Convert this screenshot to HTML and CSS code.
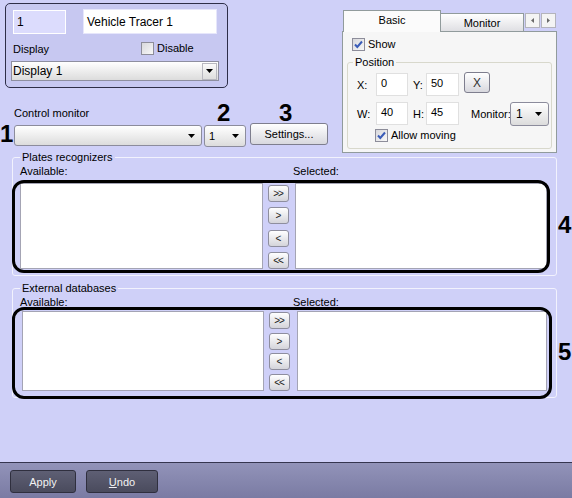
FILE: index.html
```html
<!DOCTYPE html>
<html>
<head>
<meta charset="utf-8">
<link rel="stylesheet" href="styles.css">
</head>
<body>
<div class="main">
  <div class="top">
    <div class="left">
      <div class="idpanel">
        <div class="idrow">
          <div class="field field-id">1</div>
          <div class="field field-name">Vehicle Tracer 1</div>
        </div>
        <div class="disprow">
          <span class="lbl-display">Display</span>
          <span class="chk"><span class="box"></span>Disable</span>
        </div>
        <div class="combo">
          <span class="combo-text">Display 1</span>
          <span class="combo-btn"><svg width="7" height="4" viewBox="0 0 7 4"><path d="M0 0H7L3.5 4Z" fill="#000"/></svg></span>
        </div>
      </div>
      <div class="ctrl-label">Control monitor</div>
      <div class="ctrl-row">
        <span class="anno anno-1">1</span>
        <span class="anno anno-2">2</span>
        <span class="anno anno-3">3</span>
        <div class="select select-monitor"><span class="select-text"></span><svg width="7" height="4" viewBox="0 0 7 4"><path d="M0 0H7L3.5 4Z" fill="#000"/></svg></div>
        <div class="select select-num"><span class="select-text">1</span><svg width="7" height="4" viewBox="0 0 7 4"><path d="M0 0H7L3.5 4Z" fill="#000"/></svg></div>
        <div class="btn btn-settings">Settings...</div>
      </div>
    </div>
    <div class="tabs">
      <div class="tabstrip">
        <div class="tab tab-active">Basic</div>
        <div class="tab tab-normal">Monitor</div>
        <div class="tabscroll">
          <span class="sbtn"><svg width="3" height="5" viewBox="0 0 3 5"><path d="M3 0V5L0 2.5Z" fill="#6a6a6a"/></svg></span>
          <span class="sbtn"><svg width="3" height="5" viewBox="0 0 3 5"><path d="M0 0V5L3 2.5Z" fill="#6a6a6a"/></svg></span>
        </div>
      </div>
      <div class="tabbody">
        <div class="chk chk-show"><span class="box box-checked"><svg width="11" height="11" viewBox="0 0 11 11"><path d="M2 5.5L4.3 8L9 2.5" fill="none" stroke="#3a5cb8" stroke-width="2"/></svg></span>Show</div>
        <fieldset class="pos">
          <legend class="pos-legend">Position</legend>
          <div class="posrow">
            <span class="plbl">X:</span>
            <div class="pinput pinput-a">0</div>
            <span class="plbl plbl-b">Y:</span>
            <div class="pinput pinput-b">50</div>
            <div class="btn btn-x">X</div>
          </div>
          <div class="posrow">
            <span class="plbl">W:</span>
            <div class="pinput pinput-a">40</div>
            <span class="plbl plbl-b">H:</span>
            <div class="pinput pinput-b">45</div>
            <span class="plbl-mon">Monitor:</span>
            <div class="select select-mon"><span class="select-text">1</span><svg width="7" height="4" viewBox="0 0 7 4"><path d="M0 0H7L3.5 4Z" fill="#000"/></svg></div>
          </div>
          <div class="posrow posrow-allow">
            <span class="chk"><span class="box box-checked"><svg width="11" height="11" viewBox="0 0 11 11"><path d="M2 5.5L4.3 8L9 2.5" fill="none" stroke="#3a5cb8" stroke-width="2"/></svg></span>Allow moving</span>
          </div>
        </fieldset>
      </div>
    </div>
  </div>

  <fieldset class="group group-plates">
    <legend class="group-legend">Plates recognizers</legend>
    <div class="gl-row"><span class="gl-avail">Available:</span><span>Selected:</span></div>
    <div class="lists">
      <div class="list list-avail"></div>
      <div class="arrows">
        <div class="abtn">&gt;&gt;</div>
        <div class="abtn">&gt;</div>
        <div class="abtn">&lt;</div>
        <div class="abtn">&lt;&lt;</div>
      </div>
      <div class="list list-sel"></div>
      <div class="anno-box"></div>
      <span class="anno anno-side">4</span>
    </div>
  </fieldset>

  <fieldset class="group group-ext">
    <legend class="group-legend">External databases</legend>
    <div class="gl-row"><span class="gl-avail">Available:</span><span>Selected:</span></div>
    <div class="lists">
      <div class="list list-avail"></div>
      <div class="arrows">
        <div class="abtn">&gt;&gt;</div>
        <div class="abtn">&gt;</div>
        <div class="abtn">&lt;</div>
        <div class="abtn">&lt;&lt;</div>
      </div>
      <div class="list list-sel"></div>
      <div class="anno-box"></div>
      <span class="anno anno-side">5</span>
    </div>
  </fieldset>
</div>
<div class="bottombar">
  <div class="bbtn bbtn-apply">Apply</div>
  <div class="bbtn bbtn-undo"><u>U</u>ndo</div>
</div>
</body>
</html>
```
FILE: styles.css
```css
* { box-sizing: border-box; }
html, body { margin: 0; padding: 0; }
body {
  width: 572px;
  height: 498px;
  overflow: hidden;
  background: #cfd0f8;
  font-family: "Liberation Sans", Arial, sans-serif;
  font-size: 11px;
  color: #000;
}
.main { height: 462px; }
.top { display: flex; align-items: flex-start; height: 153px; }
.left { width: 342px; }

/* id panel */
.idpanel {
  margin: 3px 0 0 5px;
  width: 223px;
  height: 85px;
  border: 1px solid #2e2e48;
  border-radius: 5px;
  background: #c7c8f1;
  padding: 6px 0 0 7px;
}
.idrow { display: flex; align-items: flex-start; }
.field { font-size: 12px; line-height: 16px; padding: 3px 3px; }
.field-id { width: 53px; height: 24px; background: #dcdcfd; border: 1px solid #fff; }
.field-name { margin: -1px 0 0 17px; width: 134px; height: 25px; background: #fff; border: 1px solid #e6e6fb; padding-top: 4px; }
.disprow { display: flex; align-items: center; margin-top: 8px; height: 13px; }
.lbl-display { width: 128px; }
.chk { display: flex; align-items: center; line-height: 13px; }
.box {
  width: 13px; height: 13px;
  border: 1px solid #8d8d9a;
  background: linear-gradient(135deg, #d8d8dc, #f8f8f8);
  margin-right: 3px;
  display: flex; align-items: center; justify-content: center;
  flex: none;
}
.combo {
  margin: 6px 0 0 -2px;
  width: 208px; height: 20px;
  border: 1px solid #8e8fa0;
  background: linear-gradient(#ffffff, #dcdcdc);
  display: flex; align-items: center; justify-content: space-between;
  padding: 0 1px 0 1px;
}
.combo-text { font-size: 12px; }
.combo-btn {
  width: 15px; height: 17px;
  border: 1px solid #b8b8c0;
  background: linear-gradient(#fafafa, #dedede);
  display: flex; align-items: center; justify-content: center;
}

/* control monitor */
.ctrl-label { margin: 19px 0 0 14px; line-height: 13px; }
.ctrl-row {
  position: relative;
  display: flex; align-items: flex-start;
  margin-top: 3px; padding-left: 14px; height: 23px;
}
.anno { position: absolute; font-size: 24px; line-height: 24px; font-weight: bold; }
.anno-1 { left: 0; top: -1px; }
.anno-2 { left: 217px; top: -22px; }
.anno-3 { left: 279px; top: -22px; }
.select {
  border: 1px solid #8c8c9c;
  border-radius: 3px;
  background: linear-gradient(#ffffff, #dcdcdc);
  display: flex; align-items: center; justify-content: space-between;
  padding: 0 6px 0 4px;
}
.select-monitor { margin-top: 2px; width: 188px; height: 21px; }
.select-num { margin: 2px 0 0 2px; width: 42px; height: 22px; }
.btn {
  border: 1px solid #7e7e8e;
  border-radius: 3px;
  background: linear-gradient(#ffffff, #d8d8de);
  display: flex; align-items: center; justify-content: center;
}
.btn-settings { margin-left: 4px; width: 78px; height: 22px; }

/* tabs */
.tabs { margin-top: 10px; width: 215px; height: 143px; }
.tabstrip { display: flex; align-items: flex-end; height: 21px; position: relative; z-index: 1; }
.tab { border: 1px solid #919b9c; border-bottom: none; text-align: center; }
.tab-active {
  margin: 0 0 -1px 1px; width: 98px; height: 22px;
  background: #fbfbfb; padding-top: 3px;
}
.tab-normal {
  width: 83px; height: 18px; border-left: none;
  background: linear-gradient(#ffffff, #dfdfe3); padding-top: 3px;
}
.tabscroll { display: flex; gap: 1px; margin-left: 1px; align-self: flex-start; margin-top: 3px; }
.sbtn {
  width: 15px; height: 15px;
  border: 1px solid #b4b4bc;
  background: #f4f4f4;
  display: flex; align-items: center; justify-content: center;
}
.tabbody {
  height: 122px;
  border: 1px solid #919b9c;
  background: #f6f6f6;
  padding: 6px 9px;
}
.chk-show { height: 13px; }
.pos {
  margin: 6px -5px 0 -5px;
  height: 92px;
  border: 1px solid #d8d8cc;
  border-radius: 3px;
  padding: 0 0 0 9px;
  min-width: 0;
}
.pos-legend { margin-left: -4px; padding: 0 2px; line-height: 10px; }
.posrow { display: flex; align-items: center; margin-top: 6px; }
.plbl { width: 19px; }
.plbl-b { width: 13px; margin-left: 5px; }
.pinput {
  height: 23px;
  background: #fff;
  border: 1px solid #e0e0e0;
  padding: 3px 4px;
  line-height: 13px;
  align-self: flex-start;
}
.pinput-a { width: 32px; }
.pinput-b { width: 33px; }
.btn-x { margin: -1px 0 0 5px; width: 26px; height: 21px; align-self: flex-start; font-size: 12px; font-weight: normal; color: #333; }
.plbl-mon { margin-left: 12px; width: 39px; }
.select-mon { width: 39px; height: 24px; padding: 0 6px 0 5px; font-size: 12px; }
.posrow-allow { margin-top: 3px; padding-left: 18px; }

/* groups */
.group {
  margin: -1px 0 0 12px;
  width: 545px;
  border: 1px solid #f2f2fd;
  border-radius: 3px;
  padding: 0 9px 6px 7px;
  min-width: 0;
}
.group-legend { padding: 0 2px; line-height: 10px; }
.gl-row { display: flex; margin-top: 3px; height: 12px; line-height: 12px; }
.gl-avail { width: 273px; }
.lists { position: relative; display: flex; margin-top: 6px; height: 86px; }
.list { background: #fff; border: 1px solid #a4a4b4; }
.list-avail { width: 243px; }
.list-sel { flex: 1; margin-left: 6px; }
.arrows {
  width: 21px; margin-left: 5px;
  display: flex; flex-direction: column; justify-content: space-between;
  padding-top: 2px;
}
.abtn {
  height: 17px;
  border: 1px solid #8e8e9e;
  border-radius: 3px;
  background: linear-gradient(#ffffff, #d4d4da);
  font-size: 10px;
  letter-spacing: -1px;
  color: #222;
  display: flex; align-items: center; justify-content: center;
  padding-right: 1px;
}
.anno-box {
  position: absolute;
  left: -8px; right: -3px; top: -3px; bottom: -4px;
  border: 3px solid #000;
  border-radius: 12px;
}
.anno-side { left: calc(100% + 11px); top: 30px; }

.group-ext { margin-top: 7px; padding-left: 9px; }
.group-ext .group-legend { margin-left: -2px; }
.group-ext .gl-row { margin-left: -2px; }
.group-ext .gl-avail { width: 273px; }
.group-ext .lists { margin-top: 3px; height: 80px; }
.group-ext .list-avail { width: 242px; }
.group-ext .list-sel { margin-left: 7px; }
.group-ext .arrows { padding-top: 1px; }
.group-ext .anno-box { left: -10px; right: -5px; top: -4px; bottom: -8px; }
.group-ext .anno-side { top: 29px; }

/* bottom bar */
.bottombar {
  height: 36px;
  border-top: 1px solid #35354f;
  background: linear-gradient(#9293b9, #7a7ba3);
  display: flex; align-items: flex-start; gap: 10px;
  padding: 7px 0 0 10px;
}
.bbtn {
  height: 23px;
  border: 1px solid #2f2f3e;
  border-radius: 3px;
  background: linear-gradient(#5e5f74, #4a4b5d);
  color: #f2f2f2;
  display: flex; align-items: center; justify-content: center;
}
.bbtn-apply { width: 66px; }
.bbtn-undo { width: 72px; }
```
